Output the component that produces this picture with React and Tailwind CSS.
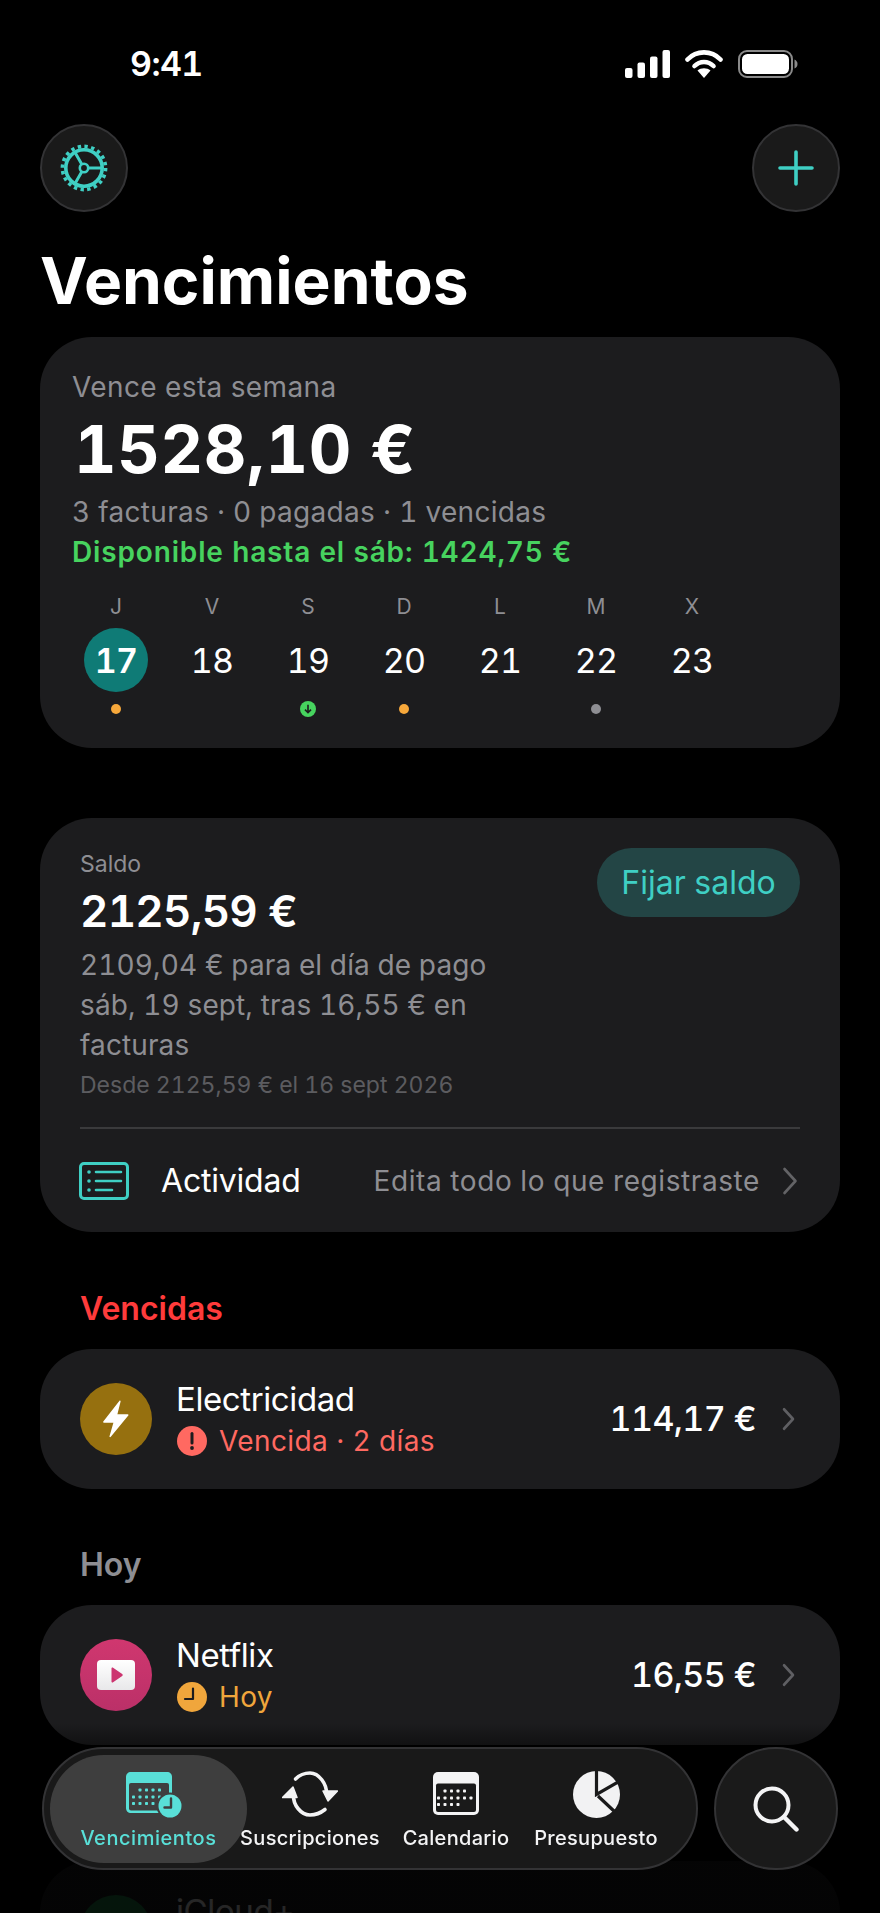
import React from "react";

const Chevron = ({ w = 16, h = 28, color = "#636366", sw = 3 }) => (
  <svg width={w} height={h} viewBox="0 0 16 28" fill="none" className="shrink-0">
    <path d="M2.5 2 L13.5 14 L2.5 26" stroke={color} strokeWidth={sw} strokeLinecap="round" strokeLinejoin="round" />
  </svg>
);

const Gear = () => (
  <svg width="48" height="48" viewBox="0 0 48 48" fill="none">
    <circle cx="24" cy="24" r="21.6" stroke="#3fcfc4" strokeWidth="3.6" strokeDasharray="3.4 3.37" />
    <circle cx="24" cy="24" r="18.2" stroke="#3fcfc4" strokeWidth="3.6" />
    <circle cx="24" cy="24" r="4.2" stroke="#3fcfc4" strokeWidth="2.6" />
    <path d="M28.2 24H42 M21.9 20.4L14.9 8.2 M21.9 27.6L14.9 39.8" stroke="#3fcfc4" strokeWidth="3" />
  </svg>
);

const ActivityIcon = () => (
  <svg width="50" height="38" viewBox="0 0 50 38" fill="none" className="shrink-0 -ml-[1px]">
    <rect x="1.5" y="1.5" width="47" height="35" rx="3.5" stroke="#3fcfc4" strokeWidth="3" />
    <path d="M17 10H42 M17 19H42 M17 28H33" stroke="#3fcfc4" strokeWidth="2.6" strokeLinecap="round" />
    <circle cx="10" cy="10" r="1.8" fill="#3fcfc4" />
    <circle cx="10" cy="19" r="1.8" fill="#3fcfc4" />
    <circle cx="10" cy="28" r="1.8" fill="#3fcfc4" />
  </svg>
);

const Bolt = () => (
  <svg width="26" height="38" viewBox="0 0 26 38" fill="white">
    <path d="M16.5 0.8 C17 0.3 17.8 0.8 17.6 1.5 L14.4 14.2 L24.6 14.2 C25.4 14.2 25.8 15 25.3 15.6 L7.8 36.8 C7.2 37.5 6.3 37 6.5 36.2 L10.4 22.8 L1 22.8 C0.2 22.8 -0.2 22 0.3 21.4 Z" />
  </svg>
);

const Play = () => (
  <svg width="38" height="30" viewBox="0 0 38 30" className="shrink-0">
    <defs>
      <linearGradient id="pw" x1="0" y1="0" x2="0" y2="1">
        <stop offset="0" stopColor="#ffffff" />
        <stop offset="1" stopColor="#e8e8ea" />
      </linearGradient>
    </defs>
    <rect width="38" height="30" rx="4" fill="url(#pw)" />
    <path d="M14.5 8.5 C14.5 7.6 15.4 7.2 16.1 7.7 L25.2 14 C25.9 14.5 25.9 15.5 25.2 16 L16.1 22.3 C15.4 22.8 14.5 22.4 14.5 21.5 Z" fill="#cc3570" />
  </svg>
);

const Alert = () => (
  <svg width="30" height="30" viewBox="0 0 30 30" className="shrink-0 ml-[1px]">
    <circle cx="15" cy="15" r="15" fill="#ff6961" />
    <path d="M15 7.5V17" stroke="#1c1c1e" strokeWidth="3" strokeLinecap="round" />
    <circle cx="15" cy="22" r="1.9" fill="#1c1c1e" />
  </svg>
);

const ClockI = () => (
  <svg width="30" height="30" viewBox="0 0 30 30" className="shrink-0 ml-[1px]">
    <circle cx="15" cy="15" r="15" fill="#f0a63c" />
    <path d="M16 6.5V17H8" fill="none" stroke="#1c1c1e" strokeWidth="2.2" strokeLinecap="round" strokeLinejoin="round" />
  </svg>
);

const dots = [
  [11, 19], [17.5, 19], [24, 19], [30.5, 19],
  [4.5, 26], [11, 26], [17.5, 26], [24, 26], [30.5, 26], [37, 26],
  [4.5, 32.5], [11, 32.5], [17.5, 32.5], [24, 32.5],
];

const CalendarClock = () => (
  <svg width="56" height="47" viewBox="0 0 56 47" fill="none" className="ml-[10px]">
    <path d="M5 1H41C44 1 46 3 46 6V37C46 40 44 42 41 42H5C2 42 0 40 0 37V6C0 3 2 1 5 1Z" fill="#59e0d8" />
    <rect x="3" y="12" width="40" height="27.5" rx="2" fill="#3f3f3f" />
    {dots.map(([x, y], i) => (
      <rect key={i} x={x - 1.5 + 3} y={y - 1.5} width="3" height="3" rx="0.8" fill="#59e0d8" />
    ))}
    <circle cx="44" cy="35" r="13.5" fill="#3f3f3f" />
    <circle cx="44" cy="35" r="11.5" fill="#59e0d8" />
    <path d="M45 27.5V36.5H38.5" stroke="#3f3f3f" strokeWidth="2.4" strokeLinecap="round" strokeLinejoin="round" />
  </svg>
);

const Refresh = () => (
  <svg width="56" height="47" viewBox="0 0 56 47" fill="none">
    <path d="M11.5 24 C11 34 19 44 28 44 C33 44 38 42.5 43 38.5" stroke="#f4f4f5" strokeWidth="3.6" strokeLinecap="round" />
    <path d="M44.5 23 C45 13 37 2 28 2 C23 2 18 3.5 13.5 8" stroke="#f4f4f5" strokeWidth="3.6" strokeLinecap="round" />
    <path d="M11 16 L0.5 26.5 H15 Z" fill="#f4f4f5" stroke="#f4f4f5" strokeWidth="1.5" strokeLinejoin="round" />
    <path d="M46 30 L55.5 20 H41 Z" fill="#f4f4f5" stroke="#f4f4f5" strokeWidth="1.5" strokeLinejoin="round" />
  </svg>
);

const Calendar = () => (
  <svg width="46" height="47" viewBox="0 0 46 47" fill="none">
    <rect x="0" y="1" width="46" height="43" rx="5" fill="#f4f4f5" />
    <rect x="3" y="12.5" width="40" height="28.5" rx="2" fill="#1a1a1a" />
    {dots.map(([x, y], i) => (
      <rect key={i} x={x - 1.5 + 1} y={y - 0.5} width="3" height="3" rx="0.8" fill="#f4f4f5" />
    ))}
  </svg>
);

const Pie = () => (
  <svg width="47" height="47" viewBox="0 0 47 47" fill="none">
    <circle cx="23.5" cy="23.5" r="23.5" fill="#f2f2f3" />
    <path d="M23.5 -1V23.5 L47 10 M25 25 L42 41" stroke="#1a1a1a" strokeWidth="3.2" />
  </svg>
);

const Search = () => (
  <svg width="46" height="46" viewBox="0 0 46 46" fill="none">
    <circle cx="19" cy="19" r="16.5" stroke="#f4f4f5" strokeWidth="4" />
    <path d="M31 31L43.5 43.5" stroke="#f4f4f5" strokeWidth="4.4" strokeLinecap="round" />
  </svg>
);

const Row = ({ icon, iconClass, name, sub, subIcon, subClass, amount }) => (
  <div className="mx-[40px] h-[140px] rounded-[52px] bg-[#1c1c1e] flex items-center pl-[40px] pr-[45px]">
    <div className={`w-[72px] h-[72px] rounded-full flex items-center justify-center shrink-0 ${iconClass}`}>{icon}</div>
    <div className="ml-[24px] flex-1 min-w-0">
      <div className="text-[33px] leading-[40px] text-white tracking-[-0.4px]">{name}</div>
      <div className="mt-[4px] h-[36px] flex items-center gap-[12px]">
        {subIcon}
        {sub && <span className={`text-[28px] leading-[36px] tracking-[0.4px] ${subClass}`}>{sub}</span>}
      </div>
    </div>
    {amount && <div className="text-[34px] leading-[40px] font-medium text-white tracking-[-0.6px]">{amount}</div>}
    <div className="ml-[26px] flex items-center">
      <Chevron w={13} h={24} color="#5f5f63" sw={3.2} />
    </div>
  </div>
);

const days = [
  ["J", "17", "o"],
  ["V", "18", ""],
  ["S", "19", "g"],
  ["D", "20", "o"],
  ["L", "21", ""],
  ["M", "22", "x"],
  ["X", "23", ""],
];

export default function App() {
  return (
    <div className="relative w-[880px] h-[1913px] overflow-hidden bg-black font-['Inter',sans-serif] tabular-nums text-white">
      {/* status bar */}
      <div className="h-[124px] pl-[130px] pr-[82px] pt-[44px] flex justify-between items-start">
        <div className="text-[34px] leading-[40px] font-semibold tracking-[-0.6px]">9:41</div>
        <div className="flex items-center gap-[15px] pt-[6px]">
          <svg width="45" height="28" viewBox="0 0 45 28" fill="white">
            <rect x="0" y="18" width="7.5" height="10" rx="2" />
            <rect x="12.5" y="12.5" width="7.5" height="15.5" rx="2" />
            <rect x="25" y="6.5" width="7.5" height="21.5" rx="2" />
            <rect x="37.5" y="0" width="7.5" height="28" rx="2" />
          </svg>
          <svg width="38" height="28" viewBox="0 0 38 28" fill="none">
            <path d="M2.5 9.5C11.5 0 26.5 0 35.5 9.5" stroke="white" strokeWidth="4.6" strokeLinecap="round" />
            <path d="M9.5 16C14.8 10.6 23.2 10.6 28.5 16" stroke="white" strokeWidth="4.6" strokeLinecap="round" />
            <path d="M19 28L12.5 20.5C16 17.5 22 17.5 25.5 20.5Z" fill="white" />
          </svg>
          <svg width="60" height="28" viewBox="0 0 60 28" fill="none">
            <rect x="1" y="1" width="53" height="26" rx="8" stroke="#8a8a8a" strokeWidth="2" />
            <rect x="4" y="4" width="47" height="20" rx="5.5" fill="white" />
            <path d="M56.5 9.5C58.5 10.5 59.5 12 59.5 14C59.5 16 58.5 17.5 56.5 18.5Z" fill="#8a8a8a" />
          </svg>
        </div>
      </div>

      {/* round buttons */}
      <div className="px-[40px] flex justify-between h-[88px]">
        <div className="w-[88px] h-[88px] rounded-full bg-[#1a1a1a] border-2 border-[#333335] flex items-center justify-center">
          <Gear />
        </div>
        <div className="w-[88px] h-[88px] rounded-full bg-[#1a1a1a] border-2 border-[#333335] flex items-center justify-center">
          <svg width="36" height="36" viewBox="0 0 36 36" fill="none">
            <path d="M18 2V34 M2 18H34" stroke="#3fcfc4" strokeWidth="3.6" strokeLinecap="round" />
          </svg>
        </div>
      </div>

      <h1 className="ml-[40px] mt-[31px] text-[64px] leading-[76px] font-bold">Vencimientos</h1>

      {/* week card */}
      <div className="mx-[40px] mt-[18px] rounded-[52px] bg-[#1c1c1e] pl-[32px] pt-[32px] pb-[31px]">
        <div className="text-[28px] leading-[36px] text-[#8e8e93] tracking-[0.4px]">Vence esta semana</div>
        <div className="mt-[8px] pl-[2px] text-[66px] leading-[72px] font-bold tracking-[0.6px]">1528,10 €</div>
        <div className="mt-[9px] text-[28px] leading-[36px] text-[#8e8e93] tracking-[0.3px]">3 facturas · 0 pagadas · 1 vencidas</div>
        <div className="mt-[4px] text-[28px] leading-[36px] font-semibold text-[#47d35f] tracking-[0.85px]">Disponible hasta el sáb: 1424,75 €</div>
        <div className="mt-[24px] -ml-[4px] flex">
          {days.map(([l, n, d], i) => (
            <div key={n} className="w-[96px] flex flex-col items-center">
              <div className="text-[21px] leading-[26px] text-[#8e8e93]">{l}</div>
              <div
                className={
                  i === 0
                    ? "mt-[8px] w-[64px] h-[64px] rounded-full bg-[#0f7b76] flex items-center justify-center text-[34px] font-semibold tracking-[-0.8px]"
                    : "mt-[8px] w-[64px] h-[64px] rounded-full flex items-center justify-center text-[34px] tracking-[-0.8px]"
                }
              >
                {n}
              </div>
              <div className="mt-[9px] h-[16px] flex items-center justify-center">
                {d === "o" && <div className="w-[10px] h-[10px] rounded-full bg-[#f7a83b]" />}
                {d === "x" && <div className="w-[10px] h-[10px] rounded-full bg-[#8e8e93]" />}
                {d === "g" && (
                  <svg width="16" height="16" viewBox="0 0 16 16" fill="none">
                    <circle cx="8" cy="8" r="8" fill="#47d35f" />
                    <path d="M8 3.8V11.5 M5 8.6L8 11.7L11 8.6" stroke="#1c1c1e" strokeWidth="1.6" />
                  </svg>
                )}
              </div>
            </div>
          ))}
        </div>
      </div>

      {/* balance card */}
      <div className="mx-[40px] mt-[70px] h-[414px] rounded-[52px] bg-[#1c1c1e] px-[40px] pt-[32px]">
        <div className="flex justify-between items-start">
          <div>
            <div className="text-[23px] leading-[28px] text-[#8e8e93]">Saldo</div>
            <div className="mt-[7px] text-[44px] leading-[52px] font-semibold tracking-[-0.8px]">2125,59 €</div>
            <div className="mt-[8px] w-[430px] text-[28px] leading-[40px] text-[#8e8e93] tracking-[0.12px]">
              2109,04 € para el día de pago sáb, 19 sept, tras 16,55 € en facturas
            </div>
            <div className="mt-[6px] text-[23px] leading-[28px] text-[#5c5c60]">Desde 2125,59 € el 16 sept 2026</div>
          </div>
          <div className="-mt-[2px] h-[69px] w-[203px] rounded-full bg-[#234545] flex items-center justify-center text-[32px] text-[#3fcfc4]">
            Fijar saldo
          </div>
        </div>
        <div className="mt-[28px] h-[2px] bg-[#3a3a3c]" />
        <div className="h-[103px] flex items-center">
          <ActivityIcon />
          <div className="ml-[32px] flex-1 text-[32px] tracking-[-0.2px]">Actividad</div>
          <div className="text-[28px] text-[#8e8e93] tracking-[0.58px]">Edita todo lo que registraste</div>
          <div className="ml-[22px] mr-[2px] flex items-center">
            <Chevron w={16} h={28} color="#636366" sw={2.6} />
          </div>
        </div>
      </div>

      <div className="ml-[80px] mt-[57px] text-[32px] leading-[40px] font-semibold text-[#ff3b3b]">Vencidas</div>
      <div className="mt-[20px]">
        <Row
          icon={<Bolt />}
          iconClass="bg-[#96700f]"
          name="Electricidad"
          sub="Vencida · 2 días"
          subIcon={<Alert />}
          subClass="text-[#ff6961]"
          amount="114,17 €"
        />
      </div>

      <div className="ml-[80px] mt-[56px] text-[32px] leading-[40px] font-semibold text-[#8e8e93]">Hoy</div>
      <div className="mt-[20px]">
        <Row
          icon={<Play />}
          iconClass="bg-gradient-to-b from-[#d0376f] to-[#bb3068]"
          name="Netflix"
          sub="Hoy"
          subIcon={<ClockI />}
          subClass="text-[#f0a63c]"
          amount="16,55 €"
        />
      </div>

      <div className="ml-[80px] mt-[56px] text-[32px] leading-[40px] font-semibold text-[#8e8e93]">Esta semana</div>
      <div className="mt-[20px]">
        <Row icon={null} iconClass="bg-[#1f8a4c]" name="iCloud+" sub="" subIcon={null} subClass="" amount="" />
      </div>

      {/* fade behind floating tab bar */}
      <div className="absolute inset-x-0 bottom-0 h-[190px] bg-gradient-to-b from-black/0 via-black/85 via-25% to-black/85" />

      {/* floating tab bar */}
      <div className="absolute left-[42px] top-[1747px] flex gap-[16px]">
        <div className="w-[656px] h-[123px] rounded-full bg-[#1a1a1a]/95 border-2 border-[#333335] backdrop-blur-md flex items-center pl-[6px] text-[20px] leading-[24px] font-medium tracking-[0.3px]">
          <div className="w-[197px] h-[108px] rounded-full bg-[#424242]/90 flex flex-col items-center pt-[16px] gap-[8px] text-[#59e0d8] tracking-[0.55px]">
            <CalendarClock />
            <div className="whitespace-nowrap">Vencimientos</div>
          </div>
          <div className="w-[126px] h-[108px] flex flex-col items-center pt-[16px] gap-[8px] text-[#f4f4f5]">
            <Refresh />
            <div className="whitespace-nowrap">Suscripciones</div>
          </div>
          <div className="w-[166px] h-[108px] flex flex-col items-center pt-[16px] gap-[8px] text-[#f4f4f5]">
            <Calendar />
            <div className="whitespace-nowrap">Calendario</div>
          </div>
          <div className="w-[114px] h-[108px] flex flex-col items-center pt-[16px] gap-[8px] text-[#f4f4f5]">
            <Pie />
            <div className="whitespace-nowrap">Presupuesto</div>
          </div>
        </div>
        <div className="w-[124px] h-[123px] rounded-full bg-[#1a1a1a] border-2 border-[#333335] flex items-center justify-center">
          <Search />
        </div>
      </div>
    </div>
  );
}
